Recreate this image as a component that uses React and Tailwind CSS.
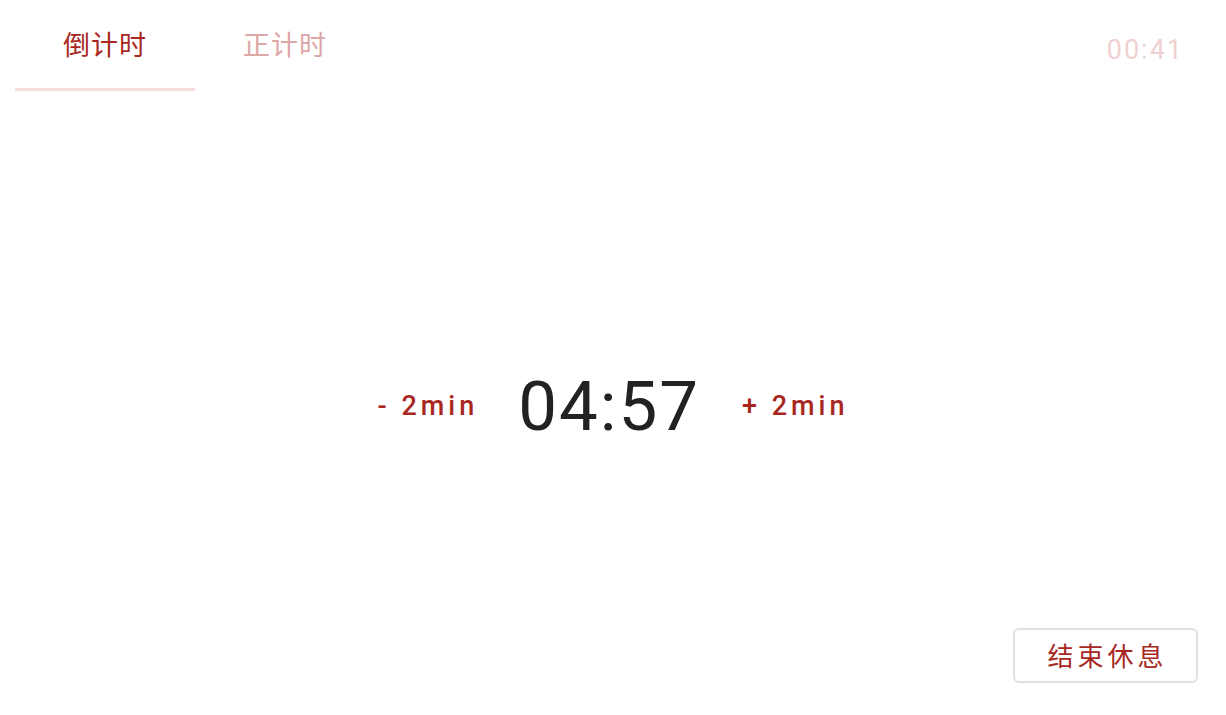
import React, { useState } from 'react';

const RED = 'text-[#a8281f]';

export default function App() {
  const [tab, setTab] = useState(0);

  return (
    <div className="h-screen w-full bg-white flex flex-col font-['Roboto','Noto_Sans_CJK_SC',sans-serif] overflow-hidden">
      {/* header */}
      <div className="h-[92px] flex items-stretch pl-[15px] pr-[42px]">
        {['倒计时', '正计时'].map((t, i) => (
          <button
            key={t}
            onClick={() => setTab(i)}
            className="w-[180px] flex flex-col"
          >
            <span
              className={`flex-1 flex items-center justify-center pt-[4px] text-[27px] tracking-[1px] ${
                tab === i ? RED : 'text-[#dca7a5]'
              }`}
            >
              {t}
            </span>
            <span className={`h-[3px] w-full mb-[1px] ${tab === i ? 'bg-[#f8ddd8]' : 'bg-transparent'}`} />
          </button>
        ))}
        <div className="flex-1" />
        <div className="flex items-center pt-[8px] text-[27px] tracking-[2px] text-[#efd1d0]">00:41</div>
      </div>

      {/* main */}
      <div className="flex-1 relative flex items-center justify-center">
        <div className="flex items-center pt-[6px]">
          <button className={`${RED} text-[27px] font-medium tracking-[4px] mr-[40px]`}>- 2min</button>
          <div className="text-[69px] text-[#222222] tracking-[2px] leading-none">04:57</div>
          <button className={`${RED} text-[27px] font-medium tracking-[4px] ml-[42px]`}>+ 2min</button>
        </div>

        <button className="absolute right-[28px] bottom-[32px] w-[185px] h-[55px] border-2 border-[#e0e0e0] rounded-[6px] flex items-center justify-center pt-[3px] pl-[4px] text-[26px] tracking-[4px] text-[#a8281f]">
          结束休息
        </button>
      </div>
    </div>
  );
}
